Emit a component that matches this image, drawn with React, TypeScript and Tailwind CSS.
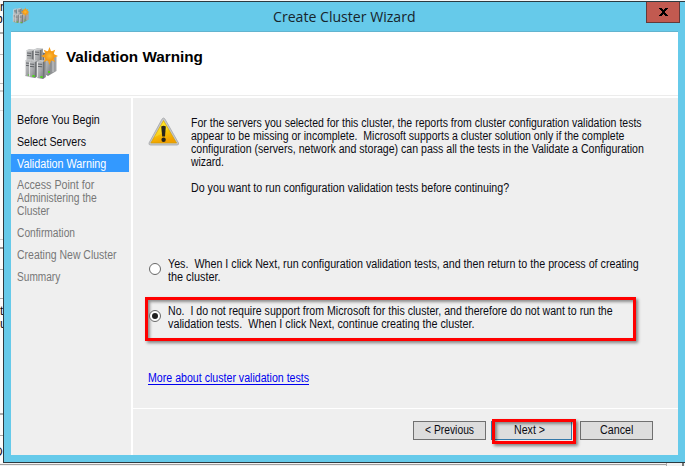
import { useLayoutEffect, useRef, useState } from "react";

// Sets a line of text condensed or widened to exactly the given width.
function Line({ text, w, className = "" }: { text: string; w: number; className?: string }) {
  const ref = useRef<HTMLSpanElement>(null);
  const [scale, setScale] = useState(1);
  useLayoutEffect(() => {
    if (ref.current) setScale(w / ref.current.offsetWidth);
  }, [text, w]);
  return (
    <span className={`block h-[13px] whitespace-pre ${className}`} style={{ width: w }}>
      <span ref={ref} className="inline-block origin-left" style={{ transform: `scaleX(${scale})` }}>
        {text}
      </span>
    </span>
  );
}

function Tower({ x, y, h = 17 }: { x: number; y: number; h?: number }) {
  return (
    <g transform={`translate(${x} ${y})`}>
      <path d={`M0 1.5 L6 2 V${h} L0 ${h - 1} Z`} fill="url(#metal)" />
      <path d="M0 1.5 L3 0 L9 .5 L6 2 Z" fill="#c4c6c8" />
      <path d={`M6 2 L9 .5 V${h - 2} L6 ${h} Z`} fill="url(#side)" />
      <path d="M1 4 L5.2 4.4 M1 6.4 L5.2 6.8" stroke="#5f6266" strokeWidth="1" />
      <path d={`M.4 2 V${h - 1.5}`} stroke="#f0f0f0" strokeWidth=".8" />
      <rect x="3.4" y={h - 3} width="2.2" height="2" fill="#4fd61c" />
    </g>
  );
}

function ClusterIcon({ size }: { size: number }) {
  return (
    <svg width={size} height={size} viewBox="0 0 32 32" className="block shrink-0 overflow-visible">
      <defs>
        <linearGradient id="metal" x1="0" x2="1" y1="0" y2="1">
          <stop offset="0" stopColor="#c9cbcd" />
          <stop offset=".55" stopColor="#a6a8aa" />
          <stop offset="1" stopColor="#7b7e81" />
        </linearGradient>
        <linearGradient id="side" x1="0" x2="1">
          <stop offset="0" stopColor="#66696c" />
          <stop offset="1" stopColor="#a4a6a8" />
        </linearGradient>
        <radialGradient id="sun">
          <stop offset="0" stopColor="#ffbd35" />
          <stop offset="1" stopColor="#f39410" />
        </radialGradient>
      </defs>
      <path d="M16 4 L24 6 L31.5 9 V23 L23 28 L16 24 Z" fill="url(#side)" />
      <path d="M19 8 L25 9 V26 L20 27 Z" fill="url(#metal)" />
      <path d="M28 9 V24" stroke="#c9cbcd" strokeWidth="1" />
      <rect x="23" y="23" width="2" height="2" fill="#4fd61c" />
      <Tower x={1} y={1} h={19} />
      <Tower x={9} y={0} h={20} />
      <Tower x={0} y={11} h={18} />
      <Tower x={4} y={12} h={18} />
      <Tower x={12} y={12} h={19} />
      <path
        d="M24.5 -1 L26.2 3.6 L30.2 1.8 L28.6 6 L33 8 L28.6 9.9 L30.2 14 L26.2 12.2 L24.5 17 L22.8 12.2 L18.8 14 L20.4 9.9 L16 8 L20.4 6 L18.8 1.8 L22.8 3.6 Z"
        fill="url(#sun)"
      />
      <circle cx="24.5" cy="8" r="5" fill="url(#sun)" />
    </svg>
  );
}

function WarningIcon() {
  return (
    <svg width="32" height="30" viewBox="0 0 32 30" className="block shrink-0">
      <defs>
        <linearGradient id="amber" x1="0" x2=".3" y1="0" y2="1">
          <stop offset="0" stopColor="#ffe817" />
          <stop offset=".5" stopColor="#fbd008" />
          <stop offset="1" stopColor="#f1a000" />
        </linearGradient>
      </defs>
      <path d="M15.5 1 Q16.5 1 17.5 3 L30.5 26 Q31 28 29 28 H2.5 Q.5 28 1 26 L13.5 3 Q14.5 1 15.5 1 Z" fill="#c6c8ca" stroke="#a4a6a8" strokeWidth=".8" />
      <path d="M15.5 3.5 L28.6 26 H2.8 Z" fill="url(#amber)" stroke="#cf9c00" strokeWidth=".6" />
      <path d="M15.5 4.5 L20 12 Q13 18 6 20.5 Z" fill="#fff05a" opacity=".35" />
      <path d="M13.2 9.5 Q15.5 7.8 17.8 9.5 L17 19.5 H14.2 Z" fill="#26241c" />
      <circle cx="15.6" cy="22.8" r="2.2" fill="#26241c" />
    </svg>
  );
}

function Radio({ checked = false }: { checked?: boolean }) {
  return (
    <span className="mt-[5px] flex size-[12px] shrink-0 items-center justify-center rounded-full border border-[#686868] bg-white">
      {checked && <span className="size-[6px] rounded-full bg-[#202020]" />}
    </span>
  );
}

function Step({ lines, active = false, muted = false }: { lines: [string, number][]; active?: boolean; muted?: boolean }) {
  return (
    <li className={active ? "mr-[2px] bg-[#3399ff] pt-[4px] pb-[1px] pl-[6px] text-white" : muted ? "pl-[6px] text-[#777777]" : "pl-[6px]"}>
      {lines.map(([t, w]) => (
        <Line key={t} text={t} w={w} />
      ))}
    </li>
  );
}

export default function App() {
  return (
    <div className="relative flex h-[466px] w-[685px] flex-col overflow-hidden bg-white font-['Liberation_Sans',Arial,sans-serif] text-[12px] leading-[13px] text-[#0b0b12]">
      <div className="h-px shrink-0 bg-[#f5f5f5]" />
      <div className="flex h-[462px] shrink-0">
        <div className="relative w-[3px] shrink-0 overflow-hidden bg-[#fbfbfb]">
          <span className="absolute top-0 left-0">r</span>
          <span className="absolute top-[12px] -left-[4px]">b</span>
          <span className="absolute top-[31px] h-[2px] w-[3px] bg-[#aaa]" />
          <span className="absolute top-[53px] h-px w-[3px] bg-[#bbb]" />
          <span className="absolute top-[82px] h-px w-[3px] bg-[#bbb]" />
          <span className="absolute top-[89px] h-[2px] w-[3px] bg-[#ccc]" />
          <span className="absolute top-[109px] h-px w-[3px] bg-[#ddd]" />
          <span className="absolute top-[238px] h-px w-[3px] bg-[#ccc]" />
          <span className="absolute top-[246px] h-[2px] w-[3px] bg-[#999]" />
          <span className="absolute top-[268px] h-px w-[3px] bg-[#aaa]" />
          <span className="absolute top-[297px] h-px w-[3px] bg-[#aaa]" />
          <span className="absolute top-[304px] left-0">t</span>
          <span className="absolute top-[317px] left-0">u</span>
          <span className="absolute top-[412px] h-[2px] w-[3px] bg-[#aaa]" />
          <span className="absolute top-[434px] h-px w-[3px] bg-[#aaa]" />
          <span className="absolute top-[445px] -left-[6px]">D</span>
        </div>

        <main className="flex flex-1 flex-col border-y border-l border-[#2c3a40] bg-[#66caea] pr-[7px] pb-[7px] pl-[7px]">
          <div className="flex h-[30px] shrink-0 border-b border-[#62b4cf]">
            <div className="w-[262px] pt-[6px] pl-[2px]">
              <ClusterIcon size={16} />
            </div>
            <h1 className="flex-1 pt-[5px] font-['Open_Sans',sans-serif] text-[14px] leading-[20px] text-[#17252c]">
              <Line text="Create Cluster Wizard" w={143} />
            </h1>
            <button className="-mr-[2px] flex h-[21px] w-[34px] items-center justify-center border border-t-0 border-[#633a3a] bg-[#c25a50] text-black">
              <svg width="9" height="8" viewBox="0 0 9 8" shapeRendering="crispEdges">
                <path d="M0 0H3L4.5 2L6 0H9V1H8L6 4L8 7H9V8H6L4.5 6L3 8H0V7H1L3 4L1 1H0Z" fill="currentColor" />
              </svg>
            </button>
          </div>

          <div className="flex min-h-0 flex-1 flex-col bg-white">
            <header className="flex h-[64px] shrink-0 border-b border-[#ececec] pt-[16px] pl-[14px]">
              <ClusterIcon size={32} />
              <h2 className="pt-[3px] pl-[9px] text-[14px] leading-[13px] font-bold text-black">
                <Line text="Validation Warning" w={137.5} />
              </h2>
            </header>

            <div className="mt-[2px] flex min-h-0 flex-1 gap-[2px]">
              <ul className="flex w-[120px] shrink-0 flex-col bg-[#efefef] pt-[16px]">
                <Step lines={[["Before You Begin", 83]]} />
                <li className="h-[9px]" />
                <Step lines={[["Select Servers", 69]]} />
                <li className="h-[5px]" />
                <Step active lines={[["Validation Warning", 89]]} />
                <li className="h-[7px]" />
                <Step muted lines={[["Access Point for", 77.5], ["Administering the", 80], ["Cluster", 32.5]]} />
                <li className="h-[9px]" />
                <Step muted lines={[["Confirmation", 58]]} />
                <li className="h-[9px]" />
                <Step muted lines={[["Creating New Cluster", 99.5]]} />
                <li className="h-[9px]" />
                <Step muted lines={[["Summary", 43]]} />
              </ul>

              <section className="flex flex-1 flex-col bg-[#efefef]">
                <div className="flex h-[311px] shrink-0 flex-col border-b border-white pl-[12px]">
                  <div className="flex pt-[19px] pl-[3px]">
                    <WarningIcon />
                    <div className="pl-[11px]">
                      <Line text="For the servers you selected for this cluster, the reports from cluster configuration validation tests" w={451} />
                      <Line text="appear to be missing or incomplete.  Microsoft supports a cluster solution only if the complete" w={433.5} />
                      <Line text="configuration (servers, network and storage) can pass all the tests in the Validate a Configuration" w={452.5} />
                      <Line text="wizard." w={33} />
                      <div className="h-[13px]" />
                      <Line text="Do you want to run configuration validation tests before continuing?" w={318.5} />
                    </div>
                  </div>

                  <label className="mt-[63px] flex pl-[4px]">
                    <Radio />
                    <span className="pl-[7px]">
                      <Line text="Yes.  When I click Next, run configuration validation tests, and then return to the process of creating" w={470.5} />
                      <Line text="the cluster." w={52.5} />
                    </span>
                  </label>

                  <label className="mt-[13px] flex h-[44px] w-[491px] border-[3px] border-[#ff0000] pt-[5px] pl-px shadow-[2px_2px_3px_rgba(0,0,0,0.45),inset_2px_2px_3px_rgba(0,0,0,0.4)]">
                    <Radio checked />
                    <span className="pl-[7px]">
                      <Line text="No.  I do not require support from Microsoft for this cluster, and therefore do not want to run the" w={445} />
                      <span className="block h-[12px] overflow-hidden">
                        <Line text="validation tests.  When I click Next, continue creating the cluster." w={307} />
                      </span>
                    </span>
                  </label>

                  <a className="mt-[31px] block pl-[3px] text-[#0000ee]">
                    <Line text="More about cluster validation tests" w={161} className="border-b border-[#0000ee]" />
                  </a>
                </div>

                <footer className="flex pt-[12px] pl-[280px]">
                  <button className="flex h-[19px] w-[73px] items-center justify-center border border-[#707070] bg-[#dddddd] text-left">
                    <Line text="< Previous" w={49} />
                  </button>
                  <div className="relative ml-[5px] h-[19px] w-[81px]">
                    <button className="flex h-full w-full items-center justify-center border border-[#3478a8] bg-[#dddddd] pr-[4px] text-left">
                      <Line text="Next >" w={31} />
                    </button>
                    <span className="absolute -top-[2px] left-px h-[25px] w-[84px] border-[3px] border-[#ff0000] shadow-[2px_2px_3px_rgba(0,0,0,0.45),inset_2px_2px_3px_rgba(0,0,0,0.4)]" />
                  </div>
                  <button className="ml-[8px] flex h-[19px] w-[73px] items-center justify-center border border-[#707070] bg-[#dddddd] text-left">
                    <Line text="Cancel" w={33} />
                  </button>
                </footer>
              </section>
            </div>
          </div>
        </main>
      </div>
      <div className="flex h-[3px] shrink-0 bg-[#f2f2f2]">
        <div className="mt-px h-px w-[666px] bg-[#a0a0a0]" />
        <div className="w-px bg-[#aaa]" />
        <div className="ml-[15px] w-[2px] bg-[#777]" />
      </div>
    </div>
  );
}
